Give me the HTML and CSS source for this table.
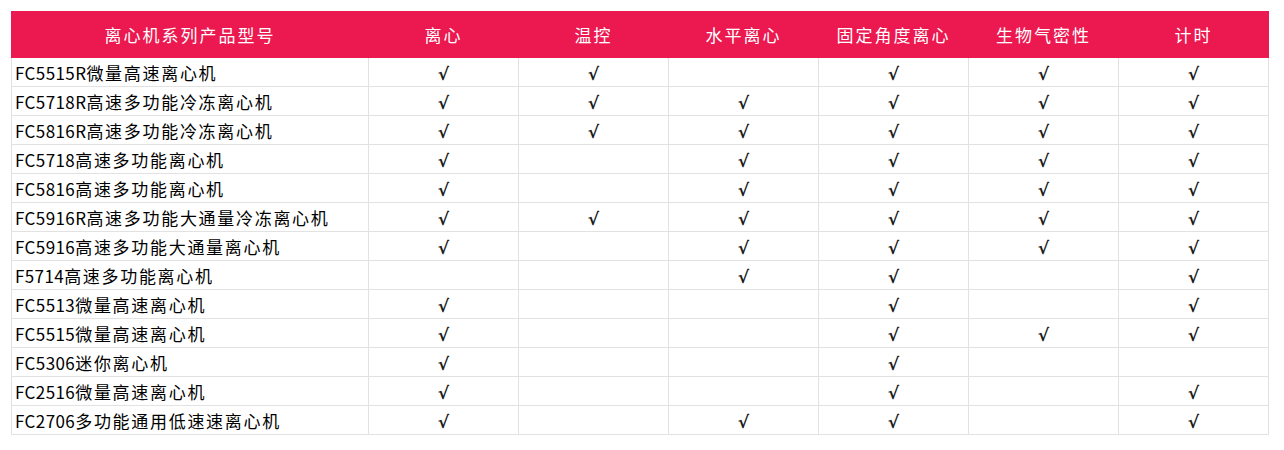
FILE: index.html
```html
<!DOCTYPE html>
<html lang="zh-CN">
<head>
<meta charset="utf-8">
<title>离心机系列产品型号</title>
<link rel="stylesheet" href="styles.css">
</head>
<body>
<table class="spec">
<colgroup>
<col class="c-name"><col class="c-opt"><col class="c-opt"><col class="c-opt"><col class="c-opt"><col class="c-opt"><col class="c-opt">
</colgroup>
<thead>
<tr><th>离心机系列产品型号</th><th>离心</th><th>温控</th><th>水平离心</th><th>固定角度离心</th><th>生物气密性</th><th>计时</th></tr>
</thead>
<tbody>
<tr><td class="name"><span class="code">FC5515R</span>微量高速离心机</td><td>√</td><td>√</td><td></td><td>√</td><td>√</td><td>√</td></tr>
<tr><td class="name"><span class="code">FC5718R</span>高速多功能冷冻离心机</td><td>√</td><td>√</td><td>√</td><td>√</td><td>√</td><td>√</td></tr>
<tr><td class="name"><span class="code">FC5816R</span>高速多功能冷冻离心机</td><td>√</td><td>√</td><td>√</td><td>√</td><td>√</td><td>√</td></tr>
<tr><td class="name"><span class="code">FC5718</span>高速多功能离心机</td><td>√</td><td></td><td>√</td><td>√</td><td>√</td><td>√</td></tr>
<tr><td class="name"><span class="code">FC5816</span>高速多功能离心机</td><td>√</td><td></td><td>√</td><td>√</td><td>√</td><td>√</td></tr>
<tr><td class="name"><span class="code">FC5916R</span>高速多功能大通量冷冻离心机</td><td>√</td><td>√</td><td>√</td><td>√</td><td>√</td><td>√</td></tr>
<tr><td class="name"><span class="code">FC5916</span>高速多功能大通量离心机</td><td>√</td><td></td><td>√</td><td>√</td><td>√</td><td>√</td></tr>
<tr><td class="name"><span class="code">F5714</span>高速多功能离心机</td><td></td><td></td><td>√</td><td>√</td><td></td><td>√</td></tr>
<tr><td class="name"><span class="code">FC5513</span>微量高速离心机</td><td>√</td><td></td><td></td><td>√</td><td></td><td>√</td></tr>
<tr><td class="name"><span class="code">FC5515</span>微量高速离心机</td><td>√</td><td></td><td></td><td>√</td><td>√</td><td>√</td></tr>
<tr><td class="name"><span class="code">FC5306</span>迷你离心机</td><td>√</td><td></td><td></td><td>√</td><td></td><td></td></tr>
<tr><td class="name"><span class="code">FC2516</span>微量高速离心机</td><td>√</td><td></td><td></td><td>√</td><td></td><td>√</td></tr>
<tr><td class="name"><span class="code">FC2706</span>多功能通用低速速离心机</td><td>√</td><td></td><td>√</td><td>√</td><td></td><td>√</td></tr>
</tbody>
</table>
</body>
</html>
```

FILE: styles.css
```css
html, body {
  margin: 0;
  padding: 0;
  background: #ffffff;
}
body {
  padding: 11px 0 0 11px;
  font-family: "Noto Sans CJK SC", "Noto Sans", sans-serif;
}
.spec {
  border-collapse: collapse;
  table-layout: fixed;
  width: 1258px;
}
.c-name { width: 357px; }
.c-opt { width: 150px; }
.spec tbody tr {
  height: 29px;
}
.spec th {
  background: #ec1850;
  color: #ffffff;
  font-weight: 400;
  font-size: 17px;
  letter-spacing: 2px;
  height: 45px;
  padding: 0;
  text-align: center;
  border: 1px solid #ec1850;
}
.spec td {
  padding: 3px 0 0;
  border: 1px solid #e2e2e2;
  text-align: center;
  font-family: "DejaVu Sans", sans-serif;
  font-weight: 700;
  font-size: 17px;
  color: #1a1a1a;
  line-height: 20px;
}
.spec td.name {
  text-align: left;
  padding: 1px 0 0 3px;
  font-family: "Noto Sans CJK SC", "Noto Sans", sans-serif;
  font-weight: 400;
  font-size: 17px;
  letter-spacing: 1.7px;
  color: #000000;
  white-space: nowrap;
}
.code {
  letter-spacing: 0.4px;
}
```
